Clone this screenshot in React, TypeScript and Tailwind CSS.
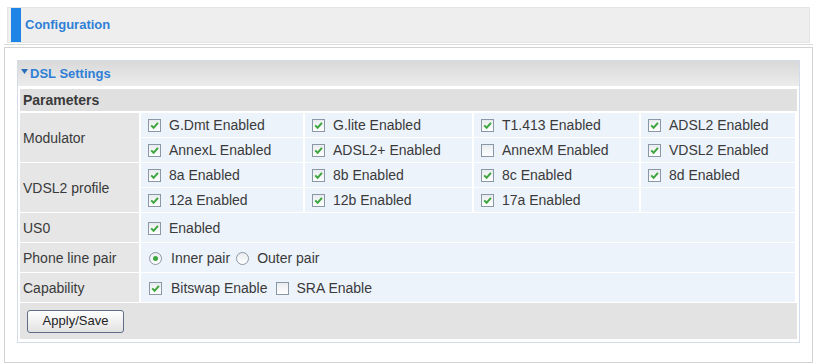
import React from 'react';

function Box({ checked }: { checked: boolean }) {
  return (
    <span className="flex h-[13px] w-[13px] shrink-0 items-center justify-center border border-[#8a97a6] bg-gradient-to-b from-[#e9ecef] to-white">
      {checked && (
        <svg width="9" height="9" viewBox="0 0 9 9">
          <path d="M1.2 4.4 L3.6 6.8 L7.9 1.8" stroke="#3da53d" strokeWidth="2" fill="none" />
        </svg>
      )}
    </span>
  );
}

function Radio({ on }: { on: boolean }) {
  return (
    <span className="flex h-[13px] w-[13px] shrink-0 items-center justify-center rounded-full border border-[#8a97a6] bg-gradient-to-b from-[#e9ecef] to-white">
      {on && <span className="h-[5px] w-[5px] rounded-full bg-[#3da53d]" />}
    </span>
  );
}

function Opt({ label, checked = true }: { label: string; checked?: boolean }) {
  return (
    <div className="flex items-center gap-[8px] bg-[#edf3fb] pl-[7px] pt-px">
      <Box checked={checked} />
      <span>{label}</span>
    </div>
  );
}

function Label({ text, span = '' }: { text: string; span?: string }) {
  return <div className={`flex items-center bg-[#e6e6e6] pl-[3px] pt-px ${span}`}>{text}</div>;
}

export default function App() {
  return (
    <div className="h-[363px] w-[817px] overflow-hidden bg-white px-[4px] pt-[7px] font-['Liberation_Sans',Arial,sans-serif] text-[14px] text-[#3a3a3a]">
      {/* page title */}
      <div className="mx-[3px] flex h-[36px] items-stretch border border-[#e4e4e4] bg-[#eeeeee]">
        <div className="ml-[3px] w-[10px] bg-[#1e84e6]" />
        <span className="ml-[4px] self-center text-[13px] font-bold text-[#2f7fd6]">Configuration</span>
      </div>
      <div className="mt-px h-px bg-[#dadada]" />

      <div className="mt-[2px] h-[316px] border border-[#d2d2d2] px-[12px] pt-[12px]">
        <div className="border border-[#d3dce8] bg-white px-[2px] pb-[3px]">
          {/* section header */}
          <div className="-mx-[2px] flex h-[25px] items-center bg-gradient-to-b from-[#d9d9d9] to-[#ececec] pl-[3px]">
            <svg width="7" height="5" viewBox="0 0 7 5" className="mb-[4px]">
              <path d="M0 0 H7 L3.5 5 Z" fill="#2a6fb8" />
            </svg>
            <span className="ml-[2px] text-[13px] font-bold text-[#2f7fd6]">DSL Settings</span>
          </div>

          <div className="mt-[3px] flex h-[22px] items-center bg-[#e0e0e0] pl-[3px] pt-px font-bold">Parameters</div>

          <div className="mt-[2px] grid grid-cols-[119px_162px_167px_165px_154px] grid-rows-[24px_24px_24px_24px_29px_29px_29px] gap-x-[2px] gap-y-px">
            <Label text="Modulator" span="row-span-2" />
            <Opt label="G.Dmt Enabled" />
            <Opt label="G.lite Enabled" />
            <Opt label="T1.413 Enabled" />
            <Opt label="ADSL2 Enabled" />
            <Opt label="AnnexL Enabled" />
            <Opt label="ADSL2+ Enabled" />
            <Opt label="AnnexM Enabled" checked={false} />
            <Opt label="VDSL2 Enabled" />

            <Label text="VDSL2 profile" span="row-span-2" />
            <Opt label="8a Enabled" />
            <Opt label="8b Enabled" />
            <Opt label="8c Enabled" />
            <Opt label="8d Enabled" />
            <Opt label="12a Enabled" />
            <Opt label="12b Enabled" />
            <Opt label="17a Enabled" />
            <div className="bg-[#edf3fb]" />

            <Label text="US0" />
            <div className="col-span-4 flex items-center gap-[8px] bg-[#edf3fb] pl-[7px] pt-px">
              <Box checked />
              <span>Enabled</span>
            </div>

            <Label text="Phone line pair" />
            <div className="col-span-4 flex items-center bg-[#edf3fb] pl-[8px] pt-px">
              <Radio on />
              <span className="ml-[9px]">Inner pair</span>
              <span className="ml-[6px]"><Radio on={false} /></span>
              <span className="ml-[8px]">Outer pair</span>
            </div>

            <Label text="Capability" />
            <div className="col-span-4 flex items-center bg-[#edf3fb] pl-[8px] pt-px">
              <Box checked />
              <span className="ml-[9px]">Bitswap Enable</span>
              <span className="ml-[8px]"><Box checked={false} /></span>
              <span className="ml-[8px]">SRA Enable</span>
            </div>
          </div>

          <div className="mt-px flex h-[36px] items-center bg-[#e3e3e3] pl-[7px]">
            <button className="h-[23px] w-[97px] rounded-[3px] border-[1.5px] border-[#5f6e86] bg-gradient-to-b from-white to-[#e2e2e2] text-[13px] text-[#222]">
              Apply/Save
            </button>
          </div>
        </div>
      </div>
    </div>
  );
}
